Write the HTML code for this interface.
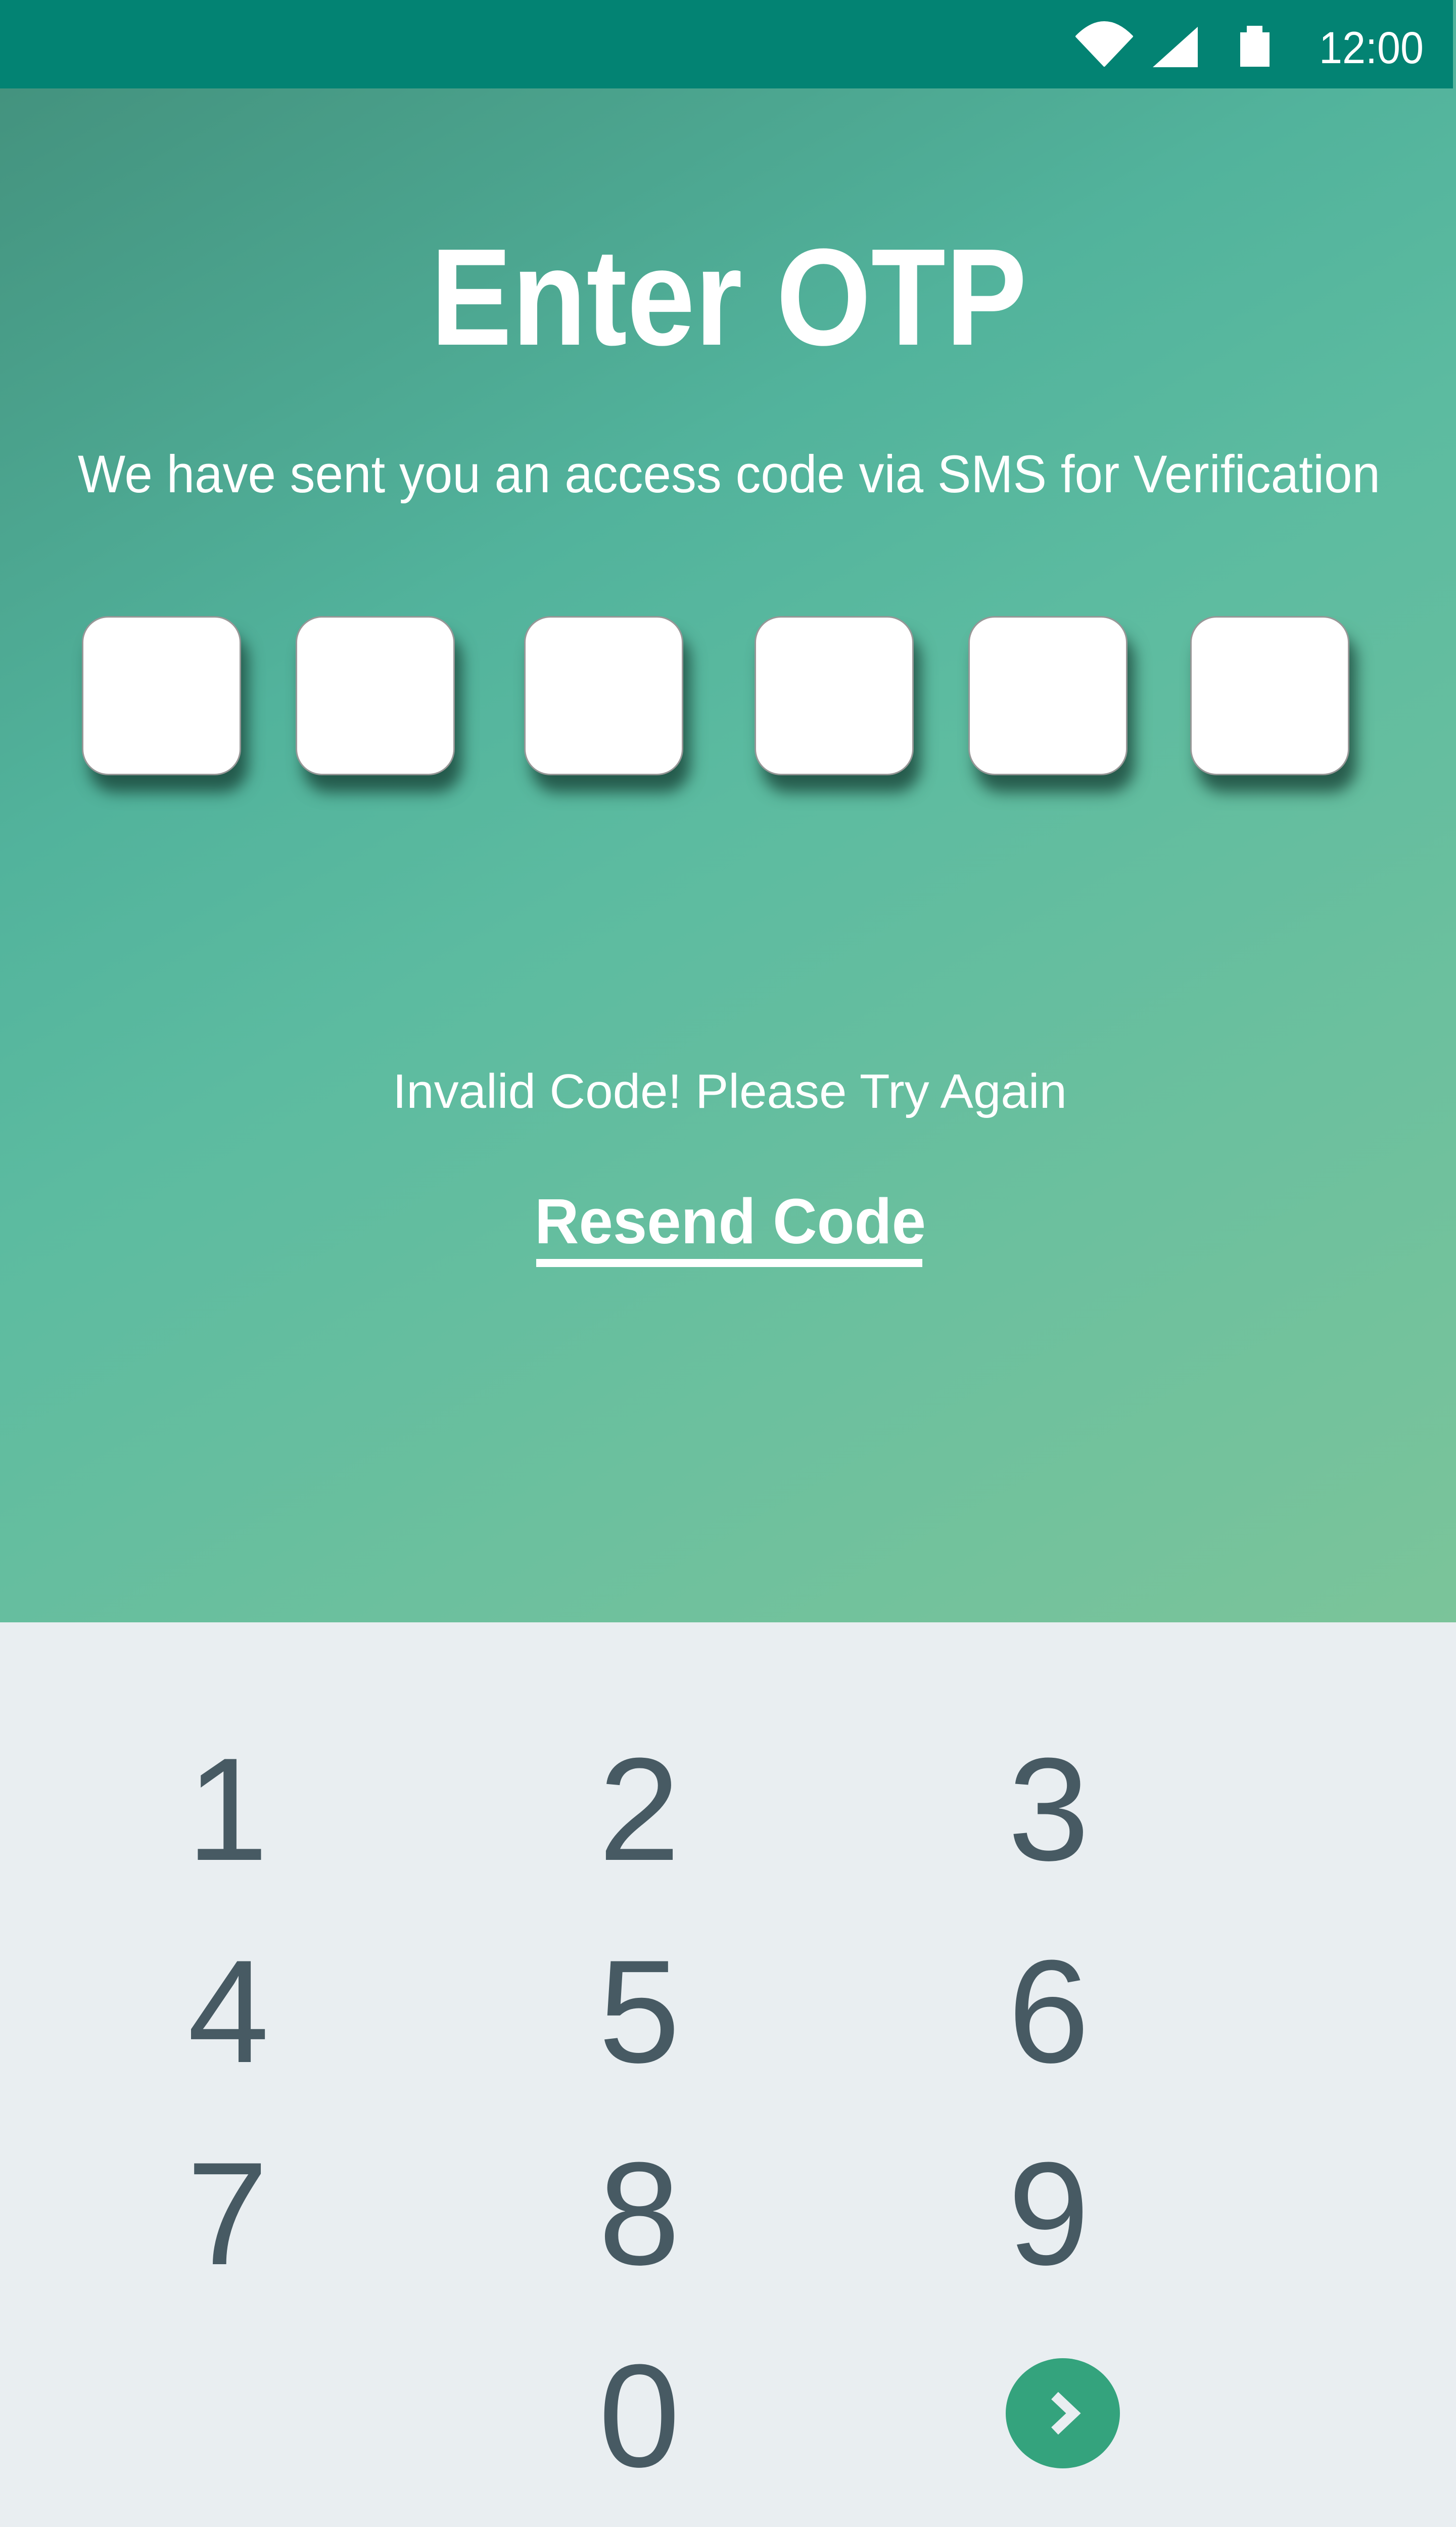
<!DOCTYPE html>
<html><head><meta charset="utf-8"><style>
html,body{margin:0;padding:0;width:2881px;height:5138px;overflow:hidden;background:#e9eef1;font-family:"Liberation Sans",sans-serif}
.grad{position:absolute;left:0;top:0;width:2881px;height:3210px;background:linear-gradient(150deg,#428f7b 0%,#52b39c 35%,#5cbba0 50%,#6cc09e 75%,#7bc49a 100%)}
.bar{position:absolute;left:0;top:0;width:2875px;height:175px;background:#038373}
.box{position:absolute;top:1219px;width:309px;height:309px;background:#fff;border:3px solid #979797;border-radius:52px;box-shadow:14px 34px 30px rgba(20,60,50,.75)}
svg{position:absolute;left:0;top:0}
</style></head><body>
<div class="grad"></div>
<div class="bar"></div>
<div class="box" style="left:162px"></div>
<div class="box" style="left:585px"></div>
<div class="box" style="left:1037px"></div>
<div class="box" style="left:1493px"></div>
<div class="box" style="left:1916px"></div>
<div class="box" style="left:2355px"></div>
<svg width="2881" height="5138" viewBox="0 0 2881 5138" font-family="Liberation Sans, sans-serif">
  <path d="M2130 72 Q2185 16 2240 72 L2185 130 Z" fill="#fff" stroke="#fff" stroke-width="4" stroke-linejoin="round"/>
  <path d="M2281 133 L2370 53 L2370 133 Z" fill="#fff"/>
  <rect x="2454" y="64" width="58" height="68" fill="#fff"/>
  <rect x="2467" y="51" width="31" height="14" fill="#fff"/>
  <text x="2610" y="125" font-size="89" fill="#fff" textLength="207" lengthAdjust="spacingAndGlyphs">12:00</text>
  <text x="852" y="682" font-size="273" font-weight="bold" fill="#fff" textLength="1180" lengthAdjust="spacingAndGlyphs">Enter OTP</text>
  <text x="154" y="974" font-size="105" fill="#fff" textLength="2577" lengthAdjust="spacingAndGlyphs">We have sent you an access code via SMS for Verification</text>
  <text x="777" y="2192" font-size="96" fill="#fff" textLength="1334" lengthAdjust="spacingAndGlyphs">Invalid Code! Please Try Again</text>
  <text x="1058" y="2460" font-size="126" font-weight="bold" fill="#fff" textLength="774" lengthAdjust="spacingAndGlyphs">Resend Code</text>
  <rect x="1061" y="2491" width="764" height="16" fill="#fff"/>
  <g font-size="290" fill="#475a63" text-anchor="middle">
    <text x="450" y="3680">1</text><text x="1265" y="3680">2</text><text x="2075" y="3680">3</text>
    <text x="452" y="4080">4</text><text x="1265" y="4080">5</text><text x="2075" y="4080">6</text>
    <text x="450" y="4480">7</text><text x="1265" y="4480">8</text><text x="2075" y="4480">9</text>
    <text x="1265" y="4880">0</text>
  </g>
  <ellipse cx="2103" cy="4775" rx="113" ry="109" fill="#34a37d"/>
  <path d="M2087 4740 L2124 4775 L2087 4810" fill="none" stroke="#e9eef1" stroke-width="20"/>
</svg>
</body></html>
